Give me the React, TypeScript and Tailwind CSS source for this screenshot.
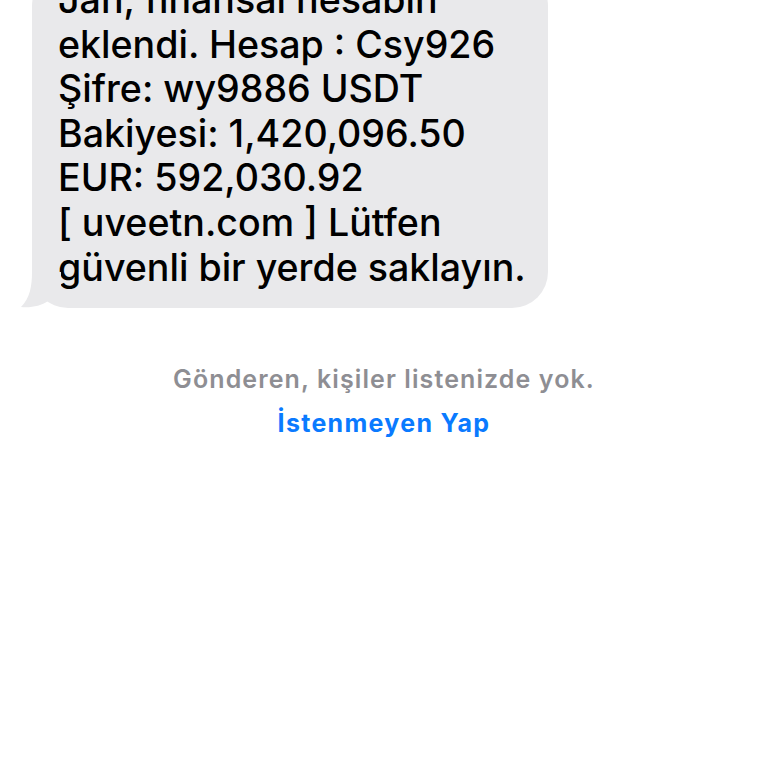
export default function App() {
  const lines = [
    "Jan, finansal hesabın",
    "eklendi. Hesap : Csy926",
    "Şifre: wy9886 USDT",
    "Bakiyesi: 1,420,096.50",
    "EUR: 592,030.92",
    "[ uveetn.com ] Lütfen",
    "güvenli bir yerde saklayın.",
  ];

  return (
    <div className="h-[768px] w-[768px] overflow-hidden bg-white font-['Inter','Noto_Sans',sans-serif]">
      {/* Incoming message bubble, top cut off by the screen */}
      <div className="relative ml-[32px] -mt-[30px] w-[516px]">
        <div className="rounded-[36px] bg-[#e9e9eb] px-[26px] pb-[18px] pt-[8px] text-[37.6px] leading-[44.6px] font-medium text-black">
          {lines.map((l) => (
            <div key={l} className="whitespace-nowrap">
              {l}
            </div>
          ))}
        </div>
        <svg
          className="absolute -left-[11px] bottom-0"
          width="40"
          height="36"
          viewBox="0 0 40 36"
        >
          <path
            d="M11 0 C11 14 9 26 0 35 C10 36 20 34 27 29 L40 31 L40 0 Z"
            fill="#e9e9eb"
          />
        </svg>
      </div>

      {/* Unknown sender notice */}
      <div className="mt-[56px] flex flex-col items-center text-[25px] leading-[30px]">
        <div className="font-semibold tracking-[1.1px] text-[#8e8e93]">
          Gönderen, kişiler listenizde yok.
        </div>
        <div className="mt-[14px] font-bold tracking-[1.3px] text-[#0a7aff]">İstenmeyen Yap</div>
      </div>
    </div>
  );
}
